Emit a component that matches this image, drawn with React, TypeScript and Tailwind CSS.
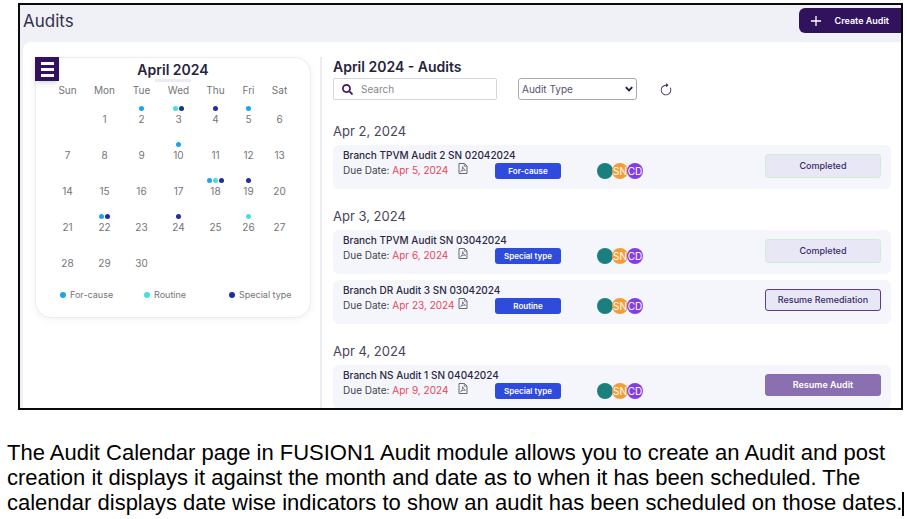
import React from "react";
import { BsArrowClockwise } from "react-icons/bs";
import { FaSearch } from "react-icons/fa";

type AuditKind = "For-cause" | "Routine" | "Special type";
type Status = "Completed" | "Resume Remediation" | "Resume Audit";

interface Audit {
  title: string;
  due: string;
  kind: AuditKind;
  status: Status;
}

const dotColor: Record<AuditKind, string> = {
  "For-cause": "bg-[#1ca4ee]",
  Routine: "bg-[#46dfdf]",
  "Special type": "bg-[#1f2f9b]",
};

const weekdays = [
  { name: "Sun", width: "w-[37px]" },
  { name: "Mon", width: "w-[37px]" },
  { name: "Tue", width: "w-[37px]" },
  { name: "Wed", width: "w-[37px]" },
  { name: "Thu", width: "w-[37px]" },
  { name: "Fri", width: "w-[29px]" },
  { name: "Sat", width: "w-[33px]" },
];

const scheduled: Record<number, AuditKind[]> = {
  2: ["For-cause"],
  3: ["Routine", "Special type"],
  4: ["Special type"],
  5: ["For-cause"],
  10: ["For-cause"],
  18: ["For-cause", "Routine", "Special type"],
  19: ["Special type"],
  22: ["For-cause", "Special type"],
  24: ["Special type"],
  26: ["Routine"],
};

const weeks = [0, 1, 2, 3, 4].map((week) =>
  weekdays.map((_, day) => {
    const date = week * 7 + day;
    return date >= 1 && date <= 30 ? date : null;
  }),
);

const days: { date: string; audits: Audit[] }[] = [
  {
    date: "Apr 2, 2024",
    audits: [
      { title: "Branch TPVM Audit 2 SN 02042024", due: "Apr 5, 2024", kind: "For-cause", status: "Completed" },
    ],
  },
  {
    date: "Apr 3, 2024",
    audits: [
      { title: "Branch TPVM Audit SN 03042024", due: "Apr 6, 2024", kind: "Special type", status: "Completed" },
      { title: "Branch DR Audit 3 SN 03042024", due: "Apr 23, 2024", kind: "Routine", status: "Resume Remediation" },
    ],
  },
  {
    date: "Apr 4, 2024",
    audits: [
      { title: "Branch NS Audit 1 SN 04042024", due: "Apr 9, 2024", kind: "Special type", status: "Resume Audit" },
    ],
  },
];

const statusStyle: Record<Status, string> = {
  Completed: "h-6 border-[#cdeed3] bg-[#e8e7f5] text-[#3a2a66] font-medium",
  "Resume Remediation": "h-[22px] border-[#5b3d8c] bg-[#e8e7f5] text-[#3a2a66] font-medium",
  "Resume Audit": "h-[22px] border-[#8a70b0] bg-[#8a70b0] text-white font-semibold",
};

function PdfIcon() {
  return (
    <svg viewBox="0 0 10 11" className="mt-px h-[11px] w-[10px] text-[#666a75]" fill="none" stroke="currentColor" aria-hidden="true">
      <path d="M1 .5h5.5l2.500 2.500v7.500h-8z" strokeWidth="1" strokeLinejoin="round" />
      <path d="M6.300 .7v2.500h2.500" strokeWidth=".8" />
      <path d="M4.600 3.600c.9 2 1.700 3.200 3 3.700-2-.3-3.700.1-5 1.300 1.500-1.200 2.200-3 2-5z" strokeWidth=".8" />
    </svg>
  );
}

function Calendar() {
  return (
    <section className="relative h-[261px] w-[276px] shrink-0 rounded-2xl rounded-tl-none border border-[#eceaf6] bg-white shadow-[0_2px_8px_rgba(0,0,0,0.05)]">
      <button
        type="button"
        aria-label="Menu"
        className="absolute -top-px -left-px flex size-6 flex-col items-center justify-center gap-[3px] bg-[#30135c] shadow-md"
      >
        <span className="h-[3px] w-[13px] bg-white" />
        <span className="h-[3px] w-[13px] bg-white" />
        <span className="h-[3px] w-[13px] bg-white" />
      </button>
      <h2 className="pt-[3px] text-center text-[14px] leading-[18px] font-semibold text-[#26243c]">April 2024</h2>
      <div className="mx-auto h-[3px] w-9 bg-[#eceaf6]" />
      <table className="ml-[13px] table-fixed text-center text-[10px] leading-3 text-[#747478]">
        <thead>
          <tr className="h-4">
            {weekdays.map((d) => (
              <th key={d.name} scope="col" className={`${d.width} p-0 font-normal`}>
                {d.name}
              </th>
            ))}
          </tr>
        </thead>
        <tbody>
          {weeks.map((week, i) => (
            <tr key={i} className="h-9">
              {week.map((date, j) => (
                <td key={j} className="p-0 align-top">
                  <div className="flex h-[15px] items-end justify-center gap-px pb-0.5">
                    {date !== null &&
                      scheduled[date]?.map((kind) => (
                        <span key={kind} className={`size-[5px] rounded-full ${dotColor[kind]}`} />
                      ))}
                  </div>
                  <div>{date}</div>
                </td>
              ))}
            </tr>
          ))}
        </tbody>
      </table>
      <ul className="mt-[11px] ml-6 grid grid-cols-[84px_85px_1fr] text-[9px] leading-3 text-[#747478]">
        {(Object.keys(dotColor) as AuditKind[]).map((kind) => (
          <li key={kind} className="flex items-center gap-1">
            <span className={`size-[6px] rounded-full ${dotColor[kind]}`} />
            {kind}
          </li>
        ))}
      </ul>
    </section>
  );
}

function AuditRow({ audit }: { audit: Audit }) {
  return (
    <li className="grid h-11 grid-cols-[152px_102px_1fr_116px] rounded-md bg-[#f5f6fc] px-[10px]">
      <div className="pt-[3px] whitespace-nowrap">
        <h4 className="text-[10px] leading-[14px] font-medium text-[#2b2843]">{audit.title}</h4>
        <div className="flex text-[10px] leading-4 text-[#44424f]">
          <p className="w-[115px]">
            Due Date: <span className="text-[#ea4458]">{audit.due}</span>
          </p>
          <PdfIcon />
        </div>
      </div>
      <span className="mt-[18px] h-4 w-[66px] rounded-[3px] bg-[#2f4bdd] text-center text-[8px] leading-4 font-semibold text-white">
        {audit.kind}
      </span>
      <div className="mt-[18px] flex text-[10px] leading-4 text-white">
        <span className="size-4 rounded-full bg-[#1b7f7e]" />
        <span className="-ml-px flex size-4 items-center justify-center rounded-full bg-[#f29d38]">SN</span>
        <span className="-ml-px flex size-4 items-center justify-center rounded-full bg-[#843de3]">CD</span>
      </div>
      <button
        type="button"
        className={`mt-[9px] rounded-[3px] border text-[9px] ${statusStyle[audit.status]}`}
      >
        {audit.status}
      </button>
    </li>
  );
}

export default function App() {
  return (
    <main className="min-h-screen overflow-hidden bg-white pt-[3px]">
      <div className="mr-1 ml-[18px] h-[407px] overflow-hidden border-2 border-[#0b0b0d] bg-[#f0f1f7] font-['Inter',sans-serif]">
        <header className="flex h-[37px] items-start justify-between pl-[3px]">
          <h1 className="pt-1 text-[17px] leading-6 text-[#34324a]">Audits</h1>
          <button
            type="button"
            className="mt-[3px] flex h-[25px] w-[102px] items-center justify-between rounded-l-md bg-[#30135c] px-3 text-[9px] font-semibold text-white"
          >
            <svg viewBox="0 0 10 10" className="size-[10px]" aria-hidden="true">
              <path d="M5 0v10M0 5h10" stroke="currentColor" strokeWidth="1.3" />
            </svg>
            Create Audit
          </button>
        </header>
        <div className="ml-[3px] flex h-[366px] rounded-tl-lg bg-white pt-[15px] pl-3">
          <Calendar />
          <section className="ml-[9px] min-w-0 grow border-l-2 border-[#ededf0] pr-[10px] pl-[11px]">
            <h2 className="pt-px text-[14px] leading-[18px] font-semibold text-[#26243c]">April 2024 - Audits</h2>
            <div className="mt-0.5 flex h-[22px] items-center">
              <label className="flex h-[22px] w-[164px] items-center gap-2 rounded-xs border border-[#d3d6de] pl-2">
                <FaSearch className="size-[11px] shrink-0 text-[#3d1d6e]" />
                <input
                  type="search"
                  aria-label="Search"
                  placeholder="Search"
                  className="w-full min-w-0 text-[10px] outline-none placeholder:text-[#85858c]"
                />
              </label>
              <div className="relative ml-[21px]">
                <select
                  aria-label="Audit Type"
                  className="block h-[22px] w-[119px] appearance-none rounded-[3px] border border-[#a9a9b0] bg-white pl-[3px] text-[10px] text-[#56516c]"
                >
                  <option>Audit Type</option>
                  <option>For-cause</option>
                  <option>Routine</option>
                  <option>Special type</option>
                </select>
                <svg
                  viewBox="0 0 8 6"
                  className="pointer-events-none absolute top-2 right-[4px] h-[6px] w-2 text-[#2c1453]"
                  fill="none"
                  aria-hidden="true"
                >
                  <path d="M0.8 1.2 4 4.4 7.2 1.2" stroke="currentColor" strokeWidth="1.9" />
                </svg>
              </div>
              <button type="button" aria-label="Refresh" className="ml-[22px] pt-0.5 text-[#3f2c66]">
                <BsArrowClockwise className="size-[14px]" />
              </button>
            </div>
            <div className="mt-1">
              {days.map((day) => (
                <section key={day.date}>
                  <h3 className="pt-[17px] pb-1 text-[13px] leading-5 text-[#47455a]">{day.date}</h3>
                  <ul className="flex flex-col gap-1.5">
                    {day.audits.map((audit) => (
                      <AuditRow key={audit.title} audit={audit} />
                    ))}
                  </ul>
                </section>
              ))}
            </div>
          </section>
        </div>
      </div>
      <p className="mt-[30px] ml-[7px] font-['Liberation_Sans',Arial,sans-serif] text-[22px] leading-[25px] whitespace-nowrap text-black">
        The Audit Calendar page in FUSION1 Audit module allows you to create an Audit and post
        <br />
        creation it displays it against the month and date as to when it has been scheduled. The
        <br />
        calendar displays date wise indicators to show an audit has been scheduled on those dates.
        <span className="inline-block h-6 w-0.5 bg-black align-middle" />
      </p>
    </main>
  );
}
